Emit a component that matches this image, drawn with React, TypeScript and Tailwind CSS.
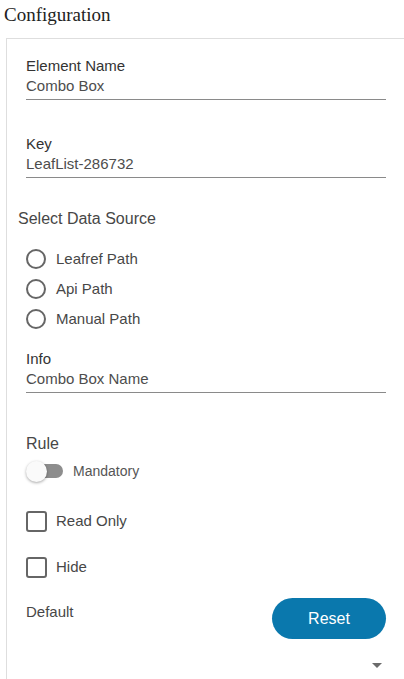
import React from 'react';

const Field: React.FC<{ label: string; value: string; className?: string }> = ({ label, value, className }) => (
  <div className={`border-b border-[#8a8a8a] pb-[3px] ${className ?? ''}`}>
    <div className="text-[15px] leading-[20px] text-[#333]">{label}</div>
    <div className="text-[15px] leading-[20px] text-[#4d4d4d]">{value}</div>
  </div>
);

const Radio: React.FC<{ label: string }> = ({ label }) => (
  <div className="flex h-[30px] items-center">
    <span className="h-[20px] w-[20px] rounded-full border-2 border-[#666]" />
    <span className="ml-[10px] text-[15px] leading-[20px] text-[#474747]">{label}</span>
  </div>
);

const Check: React.FC<{ label: string; className?: string }> = ({ label, className }) => (
  <div className={`flex h-[24px] items-center ${className ?? ''}`}>
    <span className="h-[21px] w-[21px] rounded-[3px] border-2 border-[#666]" />
    <span className="ml-[9px] text-[15px] leading-[20px] text-[#474747]">{label}</span>
  </div>
);

export default function App() {
  const sources = ['Leafref Path', 'Api Path', 'Manual Path'];

  return (
    <div className="flex h-[679px] w-[404px] flex-col overflow-hidden bg-white font-['Liberation_Sans',Arial,sans-serif]">
      <div className="mt-[3px] pl-[4px] font-['Liberation_Serif','Times_New_Roman',serif] text-[19px] leading-[24px] text-[#222]">
        Configuration
      </div>

      <div className="ml-[6px] mt-[11px] flex-1 border-l border-t border-[#dedede] pl-[19px] pr-[18px] pt-[17px]">
        <Field label="Element Name" value="Combo Box" />
        <Field label="Key" value="LeafList-286732" className="mt-[34px]" />

        <div className="-ml-2 mt-[31px] text-[16px] leading-[20px] text-[#474747]">Select Data Source</div>
        <div className="mt-[15px]">
          {sources.map((s) => (
            <Radio key={s} label={s} />
          ))}
        </div>

        <Field label="Info" value="Combo Box Name" className="mt-[15px]" />

        <div className="mt-[41px] text-[16px] leading-[20px] text-[#474747]">Rule</div>
        <div className="mt-[5px] flex h-[24px] items-center">
          <div className="relative h-[21px] w-[37px]">
            <span className="absolute left-[4px] top-[3.5px] h-[14px] w-[33px] rounded-full bg-[#8d8d8d]" />
            <span className="absolute left-0 top-0 h-[21px] w-[21px] rounded-full bg-[#fafafa] shadow-[0_1px_3px_rgba(0,0,0,0.35)]" />
          </div>
          <span className="ml-[10px] text-[14px] leading-[18px] text-[#555]">Mandatory</span>
        </div>

        <Check label="Read Only" className="mt-[26px]" />
        <Check label="Hide" className="mt-[22px]" />

        <div className="mt-[19px] flex items-start justify-between">
          <span className="mt-[4px] text-[15px] leading-[20px] text-[#474747]">Default</span>
          <button className="h-[41px] w-[114px] rounded-full bg-[#0a78ad] text-[16px] text-white">Reset</button>
        </div>

        <div className="mt-[24px] flex justify-end pr-[4px]">
          <svg width="10" height="5" viewBox="0 0 10 5">
            <path d="M0 0 L10 0 L5 5 Z" fill="#6b6b6b" />
          </svg>
        </div>
      </div>
    </div>
  );
}
